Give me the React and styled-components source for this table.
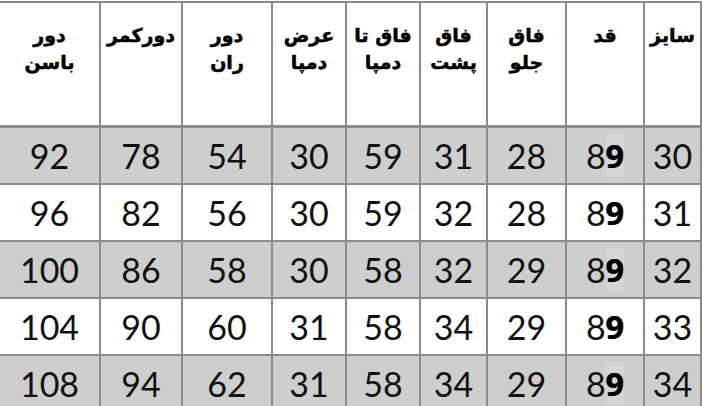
import React from "react";
import styled, { createGlobalStyle } from "styled-components";

const GlobalStyle = createGlobalStyle`
  html, body {
    margin: 0;
    padding: 0;
    background: #ffffff;
  }
`;

const Page = styled.div`
  padding-top: 1px;
  width: 703px;
  height: 406px;
  overflow: hidden;
`;

const Grid = styled.div`
  direction: rtl;
  width: 700px;
  display: grid;
  grid-template-columns: 55px 76px 77px 65px 72px 72px 88px 80px 99px;
  grid-auto-rows: 55px;
  grid-template-rows: 123px;
  gap: 2px;
  background: #8c8c8c;
  border-top: 2px solid #8c8c8c;
  border-right: 2px solid #8c8c8c;
`;

const HeadCell = styled.div`
  box-sizing: border-box;
  background: #ffffff;
  border-bottom: 1px solid #8c8c8c;
  padding-top: 19px;
  text-align: center;
  font-family: "DejaVu Sans", sans-serif;
  font-weight: 700;
  font-size: 19px;
  line-height: 27px;
  color: #000;
  white-space: nowrap;
  -webkit-text-stroke: 0.5px #000;
`;

const Cell = styled.div`
  display: flex;
  align-items: center;
  justify-content: center;
  background: ${(props) => (props.shaded ? "#cecece" : "#ffffff")};
  font-family: Lato, "Liberation Sans", sans-serif;
  font-size: 34px;
  color: #111;
  direction: ltr;
`;

const BoldNine = styled.span`
  font-family: "Open Sans", sans-serif;
  font-weight: 700;
  font-size: 32px;
  color: #000;
  background: ${(props) => (props.shaded ? "#d6d6d6" : "transparent")};
  text-shadow: -0.6px 0 0 #2a5fb0, 0.6px 0 0 #c0701a;
`;

const headers = [
  ["سایز"],
  ["قد"],
  ["فاق", "جلو"],
  ["فاق", "پشت"],
  ["فاق تا", "دمپا"],
  ["عرض", "دمپا"],
  ["دور", "ران"],
  ["دورکمر"],
  ["دور", "باسن"],
];

const rows = [
  [30, 89, 28, 31, 59, 30, 54, 78, 92],
  [31, 89, 28, 32, 59, 30, 56, 82, 96],
  [32, 89, 29, 32, 58, 30, 58, 86, 100],
  [33, 89, 29, 34, 58, 31, 60, 90, 104],
  [34, 89, 29, 34, 58, 31, 62, 94, 108],
];

const App = () => {
  return (
    <Page>
      <GlobalStyle />
      <Grid>
        {headers.map((lines, i) => (
          <HeadCell key={"h" + i}>
            {lines.map((l, j) => (
              <div key={j}>{l}</div>
            ))}
          </HeadCell>
        ))}
        {rows.map((row, r) =>
          row.map((val, c) => (
            <Cell key={r + "-" + c} shaded={r % 2 === 0}>
              {c === 1 ? (
                <>
                  8<BoldNine shaded={r % 2 === 0}>9</BoldNine>
                </>
              ) : (
                val
              )}
            </Cell>
          ))
        )}
      </Grid>
    </Page>
  );
};

export default App;
